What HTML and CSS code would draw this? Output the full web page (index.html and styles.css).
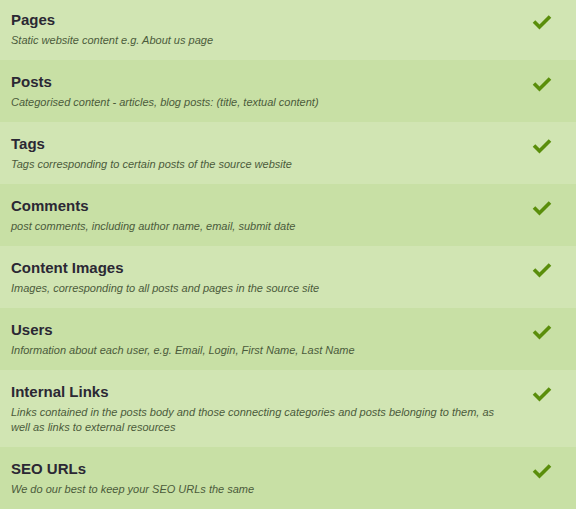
FILE: index.html
```html
<!DOCTYPE html>
<html>
<head>
<meta charset="utf-8">
<link rel="stylesheet" href="styles.css">
</head>
<body>
<ul class="features">
  <li class="feature">
    <div class="text"><h3 class="title">Pages</h3><p class="desc">Static website content e.g. About us page</p></div>
    <svg class="check" viewBox="0 0 20 16"><path d="M2 7.5 L7.5 13 L18 2.5"/></svg>
  </li>
  <li class="feature">
    <div class="text"><h3 class="title">Posts</h3><p class="desc">Categorised content - articles, blog posts: (title, textual content)</p></div>
    <svg class="check" viewBox="0 0 20 16"><path d="M2 7.5 L7.5 13 L18 2.5"/></svg>
  </li>
  <li class="feature">
    <div class="text"><h3 class="title">Tags</h3><p class="desc">Tags corresponding to certain posts of the source website</p></div>
    <svg class="check" viewBox="0 0 20 16"><path d="M2 7.5 L7.5 13 L18 2.5"/></svg>
  </li>
  <li class="feature">
    <div class="text"><h3 class="title">Comments</h3><p class="desc">post comments, including author name, email, submit date</p></div>
    <svg class="check" viewBox="0 0 20 16"><path d="M2 7.5 L7.5 13 L18 2.5"/></svg>
  </li>
  <li class="feature">
    <div class="text"><h3 class="title">Content Images</h3><p class="desc">Images, corresponding to all posts and pages in the source site</p></div>
    <svg class="check" viewBox="0 0 20 16"><path d="M2 7.5 L7.5 13 L18 2.5"/></svg>
  </li>
  <li class="feature">
    <div class="text"><h3 class="title">Users</h3><p class="desc">Information about each user, e.g. Email, Login, First Name, Last Name</p></div>
    <svg class="check" viewBox="0 0 20 16"><path d="M2 7.5 L7.5 13 L18 2.5"/></svg>
  </li>
  <li class="feature">
    <div class="text"><h3 class="title">Internal Links</h3><p class="desc">Links contained in the posts body and those connecting categories and posts belonging to them, as well as links to external resources</p></div>
    <svg class="check" viewBox="0 0 20 16"><path d="M2 7.5 L7.5 13 L18 2.5"/></svg>
  </li>
  <li class="feature">
    <div class="text"><h3 class="title">SEO URLs</h3><p class="desc">We do our best to keep your SEO URLs the same</p></div>
    <svg class="check" viewBox="0 0 20 16"><path d="M2 7.5 L7.5 13 L18 2.5"/></svg>
  </li>
</ul>
</body>
</html>
```
FILE: styles.css
```css
html, body {
  margin: 0;
  padding: 0;
  background: #c8e0a5;
}
.features {
  list-style: none;
  margin: -2px 0 0 0;
  padding: 0;
  font-family: "Liberation Sans", Arial, sans-serif;
}
.feature {
  display: flex;
  align-items: flex-start;
  padding: 13px 0 12px 11px;
  background: #d1e5b3;
}
.feature:nth-child(even) {
  background: #c8e0a5;
}
.text {
  width: 500px;
}
.title {
  margin: 0;
  font-size: 15px;
  line-height: 18px;
  font-weight: bold;
  color: #2b2834;
}
.desc {
  margin: 4px 0 0 0;
  font-size: 11px;
  line-height: 15px;
  font-style: italic;
  color: #4b5b3b;
}
.check {
  width: 20px;
  height: 16px;
  margin: 3px 0 0 21px;
  fill: none;
  stroke: #5a8e0b;
  stroke-width: 3.6;
}
```
